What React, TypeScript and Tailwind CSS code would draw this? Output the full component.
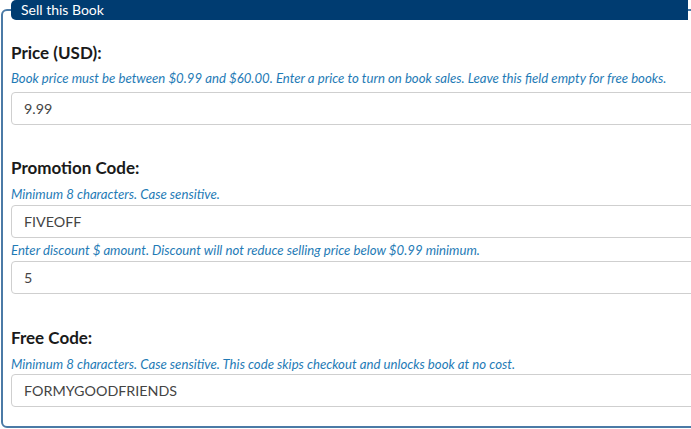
import React from 'react';

const Hint = ({ children, className = '' }: { children: React.ReactNode; className?: string }) => (
  <p className={`text-[13.2px] leading-[16px] italic text-[#1f7bb6] ${className}`}>{children}</p>
);

const Label = ({ children, className = '' }: { children: React.ReactNode; className?: string }) => (
  <h3 className={`text-[17px] leading-[24px] font-bold text-[#1a1a1a] ${className}`}>{children}</h3>
);

const Input = ({ value, className = '' }: { value: string; className?: string }) => (
  <div
    className={`h-[33px] w-[700px] rounded-[4px] border border-[#cfcfcf] bg-white pl-[12px] flex items-center text-[14.3px] text-[#444] ${className}`}
  >
    {value}
  </div>
);

export default function App() {
  return (
    <div
      className="w-[691px] h-[429px] overflow-hidden bg-white"
      style={{ fontFamily: 'Lato, "Noto Sans", sans-serif' }}
    >
      <fieldset className="ml-px w-[720px] h-[428px] border-2 border-[#4b7aa6] rounded-[6px] px-2 pb-4">
        <legend className="w-[677px] h-[20px] bg-[#003c71] rounded-l-[5px] pl-[10px] text-[14px] leading-[20px] text-white">
          Sell this Book
        </legend>

        {/* Price */}
        <Label className="mt-[21px]">Price (USD):</Label>
        <Hint className="mt-[5px]">
          Book price must be between $0.99 and $60.00. Enter a price to turn on book sales. Leave this field empty for free books.
        </Hint>
        <Input value="9.99" className="mt-[6px]" />

        {/* Promotion code */}
        <Label className="mt-[31px]">Promotion Code:</Label>
        <Hint className="mt-[6px]">Minimum 8 characters. Case sensitive.</Hint>
        <Input value="FIVEOFF" className="mt-[3px]" />
        <Hint className="mt-[4px]">Enter discount $ amount. Discount will not reduce selling price below $0.99 minimum.</Hint>
        <Input value="5" className="mt-[3px]" />

        {/* Free code */}
        <Label className="mt-[32px]">Free Code:</Label>
        <Hint className="mt-[6px]">Minimum 8 characters. Case sensitive. This code skips checkout and unlocks book at no cost.</Hint>
        <Input value="FORMYGOODFRIENDS" className="mt-[2px]" />
      </fieldset>
    </div>
  );
}
